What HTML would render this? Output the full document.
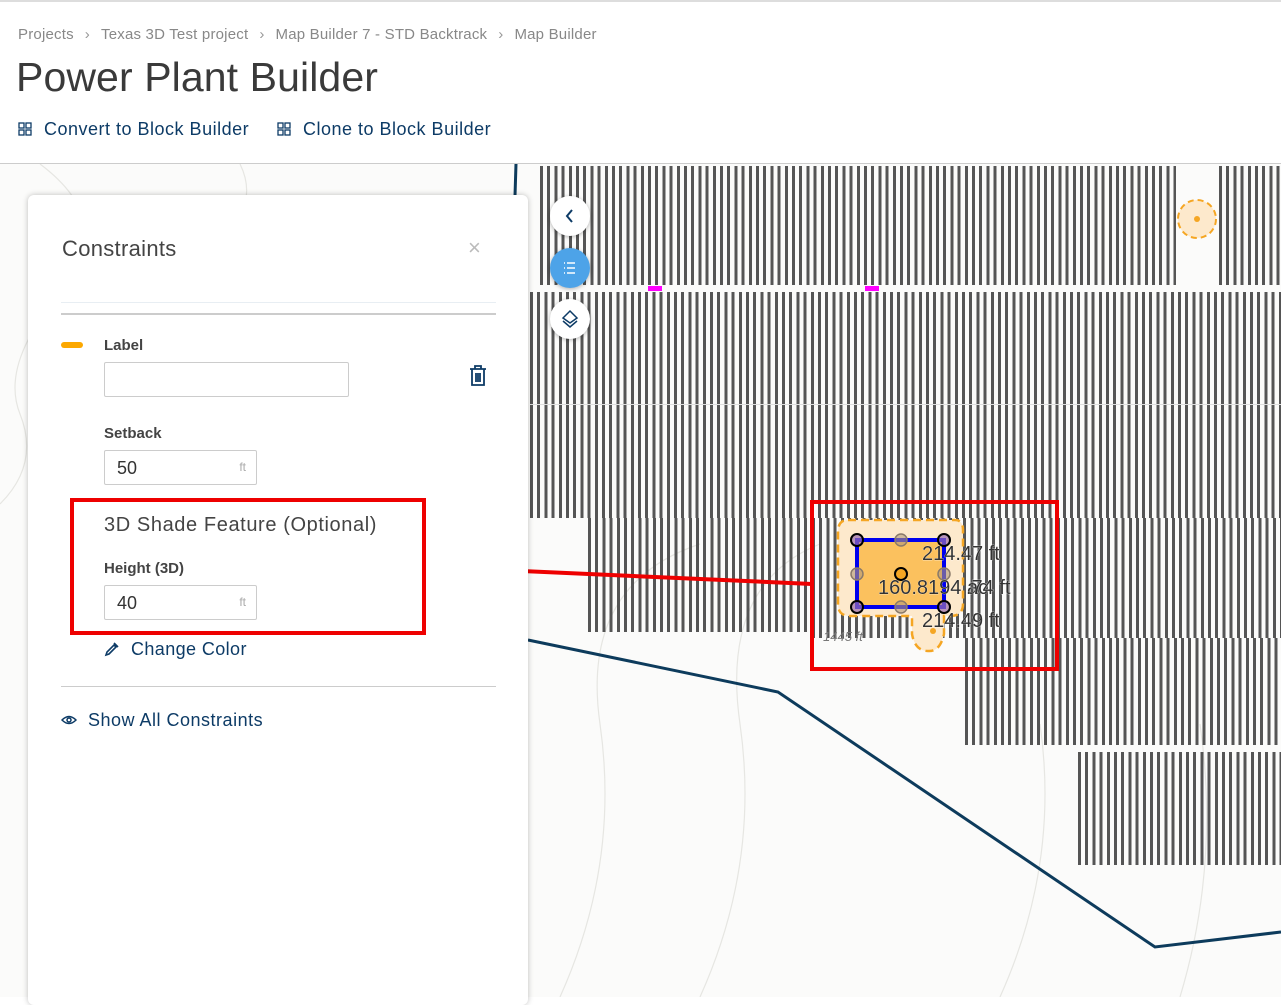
<!DOCTYPE html>
<html><head><meta charset="utf-8"><style>
*{margin:0;padding:0;box-sizing:border-box}
body{width:1281px;height:997px;overflow:hidden;background:#fff;font-family:"Liberation Sans",sans-serif;position:relative}
.hdr{position:absolute;left:0;top:0;width:1281px;height:164px;border-top:2px solid #ddd;border-bottom:1px solid #ccc;background:#fff;z-index:3}
.bc{position:absolute;left:18px;top:24px;font-size:15px;color:#888;letter-spacing:0.2px}
.bc span{margin:0 11px;color:#999}
h1{position:absolute;left:16px;top:52px;font-size:41px;font-weight:300;color:#3a3a3a;letter-spacing:0.1px}
.lnk{position:absolute;top:117px;font-size:18px;color:#0d3b66;letter-spacing:0.5px}
.ic4{display:inline-block;width:14px;height:14px;margin-right:12px;vertical-align:-1px}
.map{position:absolute;left:0;top:164px;width:1281px;height:833px;background:#fbfbfa}
.s{position:absolute;background:repeating-linear-gradient(90deg,#555 0,#555 3px,transparent 3px,transparent 7.2px)}
.panel{position:absolute;left:28px;top:195px;width:500px;height:810px;background:#fff;border-radius:6px;box-shadow:0 0 6px rgba(0,0,0,.25);z-index:2}
.t{position:absolute;color:#333}
.inp{position:absolute;border:1px solid #ccc;border-radius:2px;background:#fff}
.ft{position:absolute;right:10px;top:9px;font-size:12px;color:#aaa}
.btn{position:absolute;left:550px;width:40px;height:40px;border-radius:50%;background:#fff;box-shadow:0 1px 4px rgba(0,0,0,.3);z-index:2}
</style></head><body>
<div class="hdr">
<div class="bc">Projects<span>›</span>Texas 3D Test project<span>›</span>Map Builder 7 - STD Backtrack<span>›</span>Map Builder</div>
<h1>Power Plant Builder</h1>
<div class="lnk" style="left:18px"><svg class="ic4" viewBox="0 0 14 14" fill="none" stroke="#0d3b66" stroke-width="1.3"><rect x="1" y="1" width="5" height="5"/><rect x="8" y="1" width="5" height="5"/><rect x="1" y="8" width="5" height="5"/><rect x="8" y="8" width="5" height="5"/></svg>Convert to Block Builder</div>
<div class="lnk" style="left:277px"><svg class="ic4" viewBox="0 0 14 14" fill="none" stroke="#0d3b66" stroke-width="1.3"><rect x="1" y="1" width="5" height="5"/><rect x="8" y="1" width="5" height="5"/><rect x="1" y="8" width="5" height="5"/><rect x="8" y="8" width="5" height="5"/></svg>Clone to Block Builder</div>
</div>
<div class="map">
<svg style="position:absolute;left:0;top:0" width="1281" height="833" fill="none" stroke="#e6e6e2" stroke-width="1.2">
<path d="M0 340 Q40 300 20 250 T60 130 T40 0"/><path d="M30 833 Q80 700 60 600 T100 400"/><path d="M560 833 Q620 700 600 560 T700 380"/><path d="M700 833 Q760 700 740 560 T820 380"/><path d="M1000 833 Q1060 700 1040 560"/><path d="M1180 833 Q1220 700 1200 560"/><path d="M240 0 Q250 20 245 40"/>
</svg>
<div class="s" style="left:540px;top:2px;width:636px;height:119px"></div>
<div class="s" style="left:1219px;top:2px;width:62px;height:119px"></div>
<div class="s" style="left:530px;top:128px;width:751px;height:226px"></div>
<div style="position:absolute;left:530px;top:240px;width:751px;height:1px;background:#ddd"></div>
<div style="position:absolute;left:648px;top:122px;width:14px;height:5px;background:#f0f"></div>
<div style="position:absolute;left:865px;top:122px;width:14px;height:5px;background:#f0f"></div>
<div class="s" style="left:588px;top:354px;width:224px;height:114px"></div>
<div class="s" style="left:812px;top:354px;width:469px;height:120px"></div>
<div class="s" style="left:965px;top:474px;width:316px;height:107px"></div>
<div class="s" style="left:1078px;top:588px;width:203px;height:113px"></div>
<svg style="position:absolute;left:0;top:0" width="1281" height="833">
<circle cx="1197" cy="55" r="19" fill="#fde9cc" stroke="#f5a623" stroke-width="2" stroke-dasharray="6 4"/>
<circle cx="1197" cy="55" r="3" fill="#f5a623"/>
<path d="M516 0 L515 32" stroke="#0d3b5c" stroke-width="3"/>
<path d="M528 476 L778 528 L1155 783 L1281 768" stroke="#0d3b5c" stroke-width="3" fill="none"/>
<path d="M848 356 L955 356 Q963 356 963 366 L963 440 Q963 452 950 452 L944 452 L944 470 Q940 488 928 487 Q915 487 912 470 L912 452 L850 452 Q838 452 838 440 L838 368 Q838 356 848 356Z" fill="#fde9cc" stroke="#f5a623" stroke-width="2.5" stroke-dasharray="8 5"/>
<rect x="857" y="376" width="87" height="67" fill="#fbc15e" stroke="#0000ee" stroke-width="4"/>
<g fill="#9b6fb0" fill-opacity=".7" stroke="#000" stroke-width="2">
<circle cx="857" cy="376" r="6"/><circle cx="944" cy="376" r="6"/><circle cx="857" cy="443" r="6"/><circle cx="944" cy="443" r="6"/></g>
<g fill="#b39a7a" fill-opacity=".6" stroke="#8a7a6a" stroke-width="1.5">
<circle cx="901" cy="376" r="6"/><circle cx="857" cy="410" r="6"/><circle cx="944" cy="410" r="6"/><circle cx="901" cy="443" r="6"/></g>
<circle cx="901" cy="410" r="6" fill="#f5a623" stroke="#000" stroke-width="2"/>
<circle cx="933" cy="467" r="3" fill="#f5a623"/>
<g font-family="Liberation Sans" font-size="20" fill="#333" stroke="#fff" stroke-width="0.4" paint-order="stroke">
<text x="922" y="396">214.47 ft</text><text x="878" y="430">160.8194 ac</text><text x="966" y="430">.74 ft</text><text x="922" y="463">214.49 ft</text></g>
<text x="823" y="477" font-family="Liberation Sans" font-style="italic" font-size="13" fill="#777">1445 ft</text>
<rect x="812" y="338" width="245" height="167" fill="none" stroke="#e00" stroke-width="4"/>
<path d="M812 420 L432 403" stroke="#e00" stroke-width="4"/>
<path d="M445 392 L428 403 L446 414" stroke="#e00" stroke-width="4" fill="none"/>
</svg>
</div>
<div class="btn" style="top:196px"><svg width="40" height="40"><path d="M22 14 L17 20 L22 26" stroke="#0d3b66" stroke-width="2" fill="none"/></svg></div>
<div class="btn" style="top:248px;background:#4da3e8"><svg width="40" height="40" stroke="#fff" stroke-width="1.6"><path d="M17 15h8M17 20h8M17 25h8M14 15h1M14 20h1M14 25h1"/></svg></div>
<div class="btn" style="top:299px"><svg width="40" height="40" fill="none" stroke="#0d3b66" stroke-width="1.5"><path d="M20 12 L27 19 L20 24 L13 19Z"/><path d="M13 22 L20 28 L27 22"/></svg></div>
<div class="panel">
<div class="t" style="left:34px;top:41px;font-size:22px;color:#444;letter-spacing:0.3px">Constraints</div>
<div class="t" style="left:440px;top:40px;font-size:22px;color:#bbb">×</div>
<div style="position:absolute;left:33px;top:107px;width:435px;height:1px;background:#e8eef3"></div>
<div style="position:absolute;left:33px;top:118px;width:435px;height:2px;background:#ccc"></div>
<div style="position:absolute;left:33px;top:147px;width:22px;height:6px;border-radius:3px;background:#fca800"></div>
<div class="t" style="left:76px;top:142px;font-size:15px;font-weight:bold;color:#444">Label</div>
<div class="inp" style="left:76px;top:167px;width:245px;height:35px"></div>
<svg style="position:absolute;left:440px;top:170px" width="20" height="22" fill="none" stroke="#0d3b66" stroke-width="1.8"><path d="M2 4h16M7 4V1h6v3M4 4v16h12V4M8 8v9M10 8v9M12 8v9"/></svg>
<div class="t" style="left:76px;top:230px;font-size:15px;font-weight:bold;color:#444">Setback</div>
<div class="inp" style="left:76px;top:255px;width:153px;height:35px"><span style="position:absolute;left:12px;top:7px;font-size:18px;color:#333">50</span><span class="ft">ft</span></div>
<div class="t" style="left:76px;top:319px;font-size:20px;color:#444;letter-spacing:0.6px">3D Shade Feature (Optional)</div>
<div class="t" style="left:76px;top:365px;font-size:15px;font-weight:bold;color:#444">Height (3D)</div>
<div class="inp" style="left:76px;top:390px;width:153px;height:35px"><span style="position:absolute;left:12px;top:7px;font-size:18px;color:#333">40</span><span class="ft">ft</span></div>
<div style="position:absolute;left:42px;top:303px;width:356px;height:137px;border:4px solid #e00"></div>
<svg style="position:absolute;left:76px;top:446px" width="16" height="16" fill="none" stroke="#0d3b66" stroke-width="1.6"><path d="M2 14 L3 11 L10 4 L12 6 L5 13Z M10 2 L14 6"/></svg>
<div class="t" style="left:103px;top:444px;font-size:18px;color:#0d3b66;letter-spacing:0.4px">Change Color</div>
<div style="position:absolute;left:33px;top:491px;width:435px;height:1px;background:#ccc"></div>
<svg style="position:absolute;left:33px;top:519px" width="16" height="12" fill="none" stroke="#0d3b66" stroke-width="1.5"><path d="M1 6 Q8 -1 15 6 Q8 13 1 6Z"/><circle cx="8" cy="6" r="2"/></svg>
<div class="t" style="left:60px;top:515px;font-size:18px;color:#0d3b66;letter-spacing:0.5px">Show All Constraints</div>
</div>
</body></html>
